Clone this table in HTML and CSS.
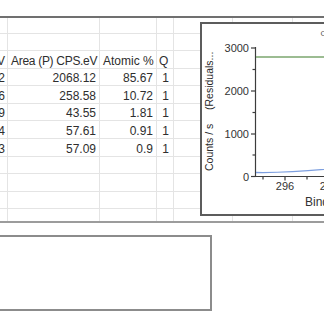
FILE: index.html
```html
<!DOCTYPE html>
<html>
<head>
<meta charset="utf-8">
<link rel="stylesheet" href="styles.css">
</head>
<body>
<div class="page">
  <div class="sheet">
    <div class="row first"><div class="cell ca"></div><div class="cell cb"></div><div class="cell cc"></div><div class="cell cd"></div><div class="cell ce"></div><div class="cell cf"></div><div class="cell cg"></div></div>
    <div class="row"><div class="cell ca"></div><div class="cell cb"></div><div class="cell cc"></div><div class="cell cd"></div><div class="cell ce"></div><div class="cell cf"></div><div class="cell cg"></div></div>
    <div class="row hd"><div class="cell ca">V</div><div class="cell cb">Area (P) CPS.eV</div><div class="cell cc">Atomic %</div><div class="cell cd">Q</div><div class="cell ce"></div><div class="cell cf"></div><div class="cell cg"></div></div>
    <div class="row"><div class="cell ca">2</div><div class="cell cb">2068.12</div><div class="cell cc">85.67</div><div class="cell cd">1</div><div class="cell ce"></div><div class="cell cf"></div><div class="cell cg"></div></div>
    <div class="row"><div class="cell ca">6</div><div class="cell cb">258.58</div><div class="cell cc">10.72</div><div class="cell cd">1</div><div class="cell ce"></div><div class="cell cf"></div><div class="cell cg"></div></div>
    <div class="row"><div class="cell ca">9</div><div class="cell cb">43.55</div><div class="cell cc">1.81</div><div class="cell cd">1</div><div class="cell ce"></div><div class="cell cf"></div><div class="cell cg"></div></div>
    <div class="row"><div class="cell ca">4</div><div class="cell cb">57.61</div><div class="cell cc">0.91</div><div class="cell cd">1</div><div class="cell ce"></div><div class="cell cf"></div><div class="cell cg"></div></div>
    <div class="row"><div class="cell ca">3</div><div class="cell cb">57.09</div><div class="cell cc">0.9</div><div class="cell cd">1</div><div class="cell ce"></div><div class="cell cf"></div><div class="cell cg"></div></div>
    <div class="row"><div class="cell ca"></div><div class="cell cb"></div><div class="cell cc"></div><div class="cell cd"></div><div class="cell ce"></div><div class="cell cf"></div><div class="cell cg"></div></div>
    <div class="row"><div class="cell ca"></div><div class="cell cb"></div><div class="cell cc"></div><div class="cell cd"></div><div class="cell ce"></div><div class="cell cf"></div><div class="cell cg"></div></div>
    <div class="row"><div class="cell ca"></div><div class="cell cb"></div><div class="cell cc"></div><div class="cell cd"></div><div class="cell ce"></div><div class="cell cf"></div><div class="cell cg"></div></div>
    <div class="row"><div class="cell ca"></div><div class="cell cb"></div><div class="cell cc"></div><div class="cell cd"></div><div class="cell ce"></div><div class="cell cf"></div><div class="cell cg"></div></div>

    <div class="chart">
      <svg class="plot" width="136" height="190" viewBox="202 24 136 190">
        <text class="title" x="320.5" y="36">C 1s</text>
        <text class="ylab" x="213" y="171" transform="rotate(-90 213 171)">Counts / s</text>
        <text class="ylab" x="213" y="110" transform="rotate(-90 213 110)">(Residuals...</text>
        <line class="axis" x1="255.5" y1="47" x2="255.5" y2="177"/>
        <line class="axis" x1="255" y1="176.5" x2="340" y2="176.5"/>
        <line class="axis" x1="251" y1="48" x2="255.5" y2="48"/>
        <line class="axis" x1="251" y1="91" x2="255.5" y2="91"/>
        <line class="axis" x1="251" y1="134" x2="255.5" y2="134"/>
        <line class="axis" x1="251" y1="176.5" x2="255.5" y2="176.5"/>
        <line class="axis" x1="252.5" y1="69.5" x2="255.5" y2="69.5"/>
        <line class="axis" x1="252.5" y1="112.5" x2="255.5" y2="112.5"/>
        <line class="axis" x1="252.5" y1="155" x2="255.5" y2="155"/>
        <line class="axis" x1="263" y1="176.5" x2="263" y2="179.5"/>
        <line class="axis" x1="285" y1="176.5" x2="285" y2="180.5"/>
        <line class="axis" x1="307" y1="176.5" x2="307" y2="179.5"/>
        <line class="axis" x1="329" y1="176.5" x2="329" y2="180.5"/>
        <text class="tick" x="249" y="52" text-anchor="end">3000</text>
        <text class="tick" x="249" y="95" text-anchor="end">2000</text>
        <text class="tick" x="249" y="138" text-anchor="end">1000</text>
        <text class="tick" x="249" y="180.5" text-anchor="end">0</text>
        <text class="tick" x="285" y="189.5" text-anchor="middle">296</text>
        <text class="tick" x="329" y="189.5" text-anchor="middle">294</text>
        <text class="xlab" x="305" y="206">Binding Energy (eV)</text>
        <line class="fit" x1="256" y1="57" x2="340" y2="57"/>
        <path class="resid" d="M256 172.5 C 280 172.8, 305 171.8, 340 167.8"/>
      </svg>
    </div>
  </div>
  <div class="rule"></div>
  <div class="panel"></div>
</div>
</body>
</html>
```

FILE: styles.css
```css
html, body {
  margin: 0;
  padding: 0;
  background: #ffffff;
}

body {
  width: 324px;
  height: 324px;
  overflow: hidden;
  font-family: "Liberation Sans", Arial, sans-serif;
}

.page {
  padding-top: 16px;
}

.sheet {
  position: relative;
  height: 203px;
  border-top: 2px solid #707070;
  overflow: hidden;
}

.row {
  display: flex;
  height: 17.6px;
  box-sizing: border-box;
  border-bottom: 1px solid #e4e4e4;
}

.row.first {
  height: 15.5px;
}

.cell {
  flex: none;
  box-sizing: border-box;
  border-right: 1px solid #e4e4e4;
  display: flex;
  align-items: flex-end;
  justify-content: flex-end;
  padding: 0 3px 0 3px;
  font-size: 12px;
  line-height: 14px;
  color: #2e2e2e;
  white-space: nowrap;
  overflow: hidden;
}

.ca { width: 40px; margin-left: -32px; padding-right: 2px; }
.cb { width: 92px; }
.cc { width: 57px; }
.cd { width: 17px; padding: 0 4px 0 2px; }
.ce { width: 59px; }
.cf { width: 60px; }
.cg { width: 60px; }

.hd .cb, .hd .cc, .hd .cd {
  justify-content: flex-start;
}

.hd .cb {
  letter-spacing: -0.3px;
}

.chart {
  position: absolute;
  left: 200px;
  top: 4px;
  width: 140px;
  height: 194px;
  box-sizing: border-box;
  border: 2px solid #5c5c5c;
  background: #ffffff;
}

.plot {
  display: block;
}

.plot text {
  font-family: "Liberation Sans", Arial, sans-serif;
  fill: #333333;
}

.plot .tick { font-size: 11px; }
.plot .ylab { font-size: 10.5px; fill: #2a2a2a; }
.plot .xlab { font-size: 12px; }
.plot .title { font-size: 8px; fill: #555555; }

.axis {
  stroke: #3c3c3c;
  stroke-width: 1.2;
}

.fit {
  stroke: #7ba66e;
  stroke-width: 1.4;
}

.resid {
  fill: none;
  stroke: #7d9fdf;
  stroke-width: 1.3;
}

.rule {
  border-top: 2px solid #9c9c9c;
}

.panel {
  margin-top: 12px;
  margin-left: -4px;
  width: 216px;
  height: 76px;
  box-sizing: border-box;
  border: 2px solid #8c8c8c;
}
```
